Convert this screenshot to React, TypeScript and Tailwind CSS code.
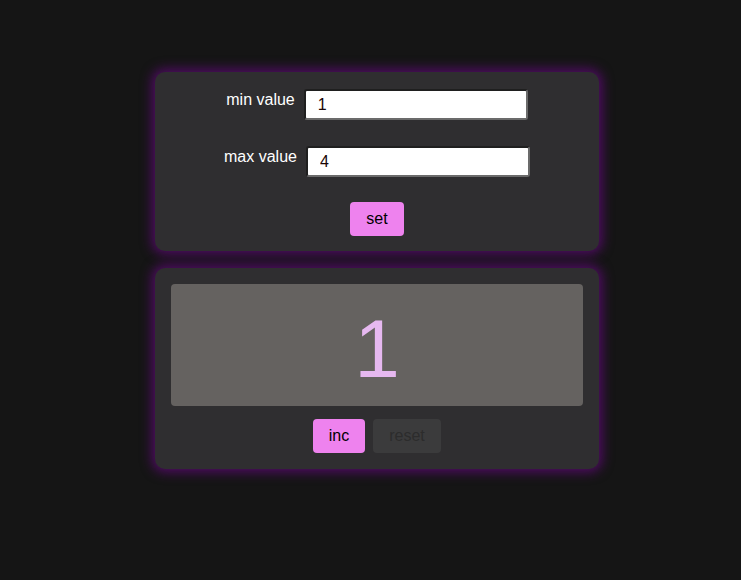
import React from "react";

export default function App() {
  const font = { fontFamily: '"Liberation Sans", Arial, sans-serif' };
  const inputCls =
    "w-[224px] h-[31px] bg-white text-[#1a0505] text-[16px] pl-[12px] rounded-[3px] border-2 border-t-[#1f1f1f] border-l-[#1f1f1f] border-r-[#6b6b6b] border-b-[#6b6b6b] outline-none";
  return (
    <div className="min-h-[580px] w-full bg-[#151515] pt-[72px] pl-[155px]" style={font}>
      <div className="w-[444px] flex flex-col gap-[17px]">
        <div className="rounded-[10px] bg-[#2f2e30] shadow-[0_0_12px_3px_#520b66] pt-[17px] pb-[15px] flex flex-col items-center">
          <div className="flex items-start gap-[9px]">
            <span className="text-white text-[16px] leading-[18px] pt-[2px]">min value</span>
            <input className={inputCls} defaultValue="1" />
          </div>
          <div className="flex items-start gap-[9px] mt-[26px]">
            <span className="text-white text-[16px] leading-[18px] pt-[2px]">max value</span>
            <input className={inputCls} defaultValue="4" />
          </div>
          <button className="mt-[25px] w-[54px] h-[34px] rounded-[4px] bg-[#ee82ee] text-black text-[16px]">
            set
          </button>
        </div>
        <div className="rounded-[10px] bg-[#2f2e30] shadow-[0_0_12px_3px_#520b66] p-[16px] flex flex-col items-center">
          <div className="w-full h-[122px] rounded-[4px] bg-[#656260] flex items-center justify-center">
            <span className="text-[82px] leading-none text-[#e6b8f0] mt-[8px]">1</span>
          </div>
          <div className="flex gap-[8px] mt-[13px]">
            <button className="w-[52px] h-[34px] rounded-[4px] bg-[#ee82ee] text-black text-[16px]">inc</button>
            <button className="w-[68px] h-[34px] rounded-[4px] bg-[#3b3b3c] text-[#2c2c2c] text-[16px]">reset</button>
          </div>
        </div>
      </div>
    </div>
  );
}
